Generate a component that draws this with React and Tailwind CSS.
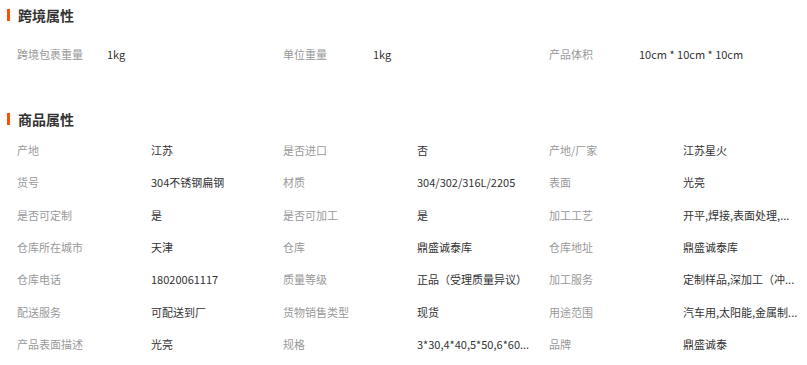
const font = { fontFamily: '"Noto Sans CJK SC", "Liberation Sans", sans-serif' };

const crossBorder = [
  ["跨境包裹重量", "1kg"],
  ["单位重量", "1kg"],
  ["产品体积", "10cm * 10cm * 10cm"],
];

const attrs = [
  ["产地", "江苏"],
  ["是否进口", "否"],
  ["产地/厂家", "江苏星火"],
  ["货号", "304不锈钢扁钢"],
  ["材质", "304/302/316L/2205"],
  ["表面", "光亮"],
  ["是否可定制", "是"],
  ["是否可加工", "是"],
  ["加工工艺", "开平,焊接,表面处理,..."],
  ["仓库所在城市", "天津"],
  ["仓库", "鼎盛诚泰库"],
  ["仓库地址", "鼎盛诚泰库"],
  ["仓库电话", "18020061117"],
  ["质量等级", "正品（受理质量异议）"],
  ["加工服务", "定制样品,深加工（冲..."],
  ["配送服务", "可配送到厂"],
  ["货物销售类型", "现货"],
  ["用途范围", "汽车用,太阳能,金属制..."],
  ["产品表面描述", "光亮"],
  ["规格", "3*30,4*40,5*50,6*60..."],
  ["品牌", "鼎盛诚泰"],
];

function SectionTitle({ children }) {
  return (
    <div className="flex items-center h-5 pl-[7px]">
      <span className="w-[3px] h-3 bg-[#ff5000]" />
      <span className="ml-2 text-[14px] font-bold text-[#333] leading-5">{children}</span>
    </div>
  );
}

export default function App() {
  return (
    <div className="w-[807px] h-[365px] bg-white overflow-hidden pt-[5px] text-[11px]" style={font}>
      <SectionTitle>跨境属性</SectionTitle>
      <div className="grid grid-cols-[266px_266px_266px] pl-[17px] mt-[13px]">
        {crossBorder.map(([k, v]) => (
          <div key={k} className="flex items-center h-8">
            <span className="w-[90px] text-[#999]">{k}</span>
            <span className="text-[#333]">{v}</span>
          </div>
        ))}
      </div>
      <div className="mt-[39px]">
        <SectionTitle>商品属性</SectionTitle>
      </div>
      <div className="grid grid-cols-[266px_266px_266px] pl-[17px] mt-[5px]">
        {attrs.map(([k, v]) => (
          <div key={k} className="flex items-center h-[32.33px]">
            <span className="w-[134px] shrink-0 text-[#999]">{k}</span>
            <span className="whitespace-nowrap text-[#333]">{v}</span>
          </div>
        ))}
      </div>
    </div>
  );
}
